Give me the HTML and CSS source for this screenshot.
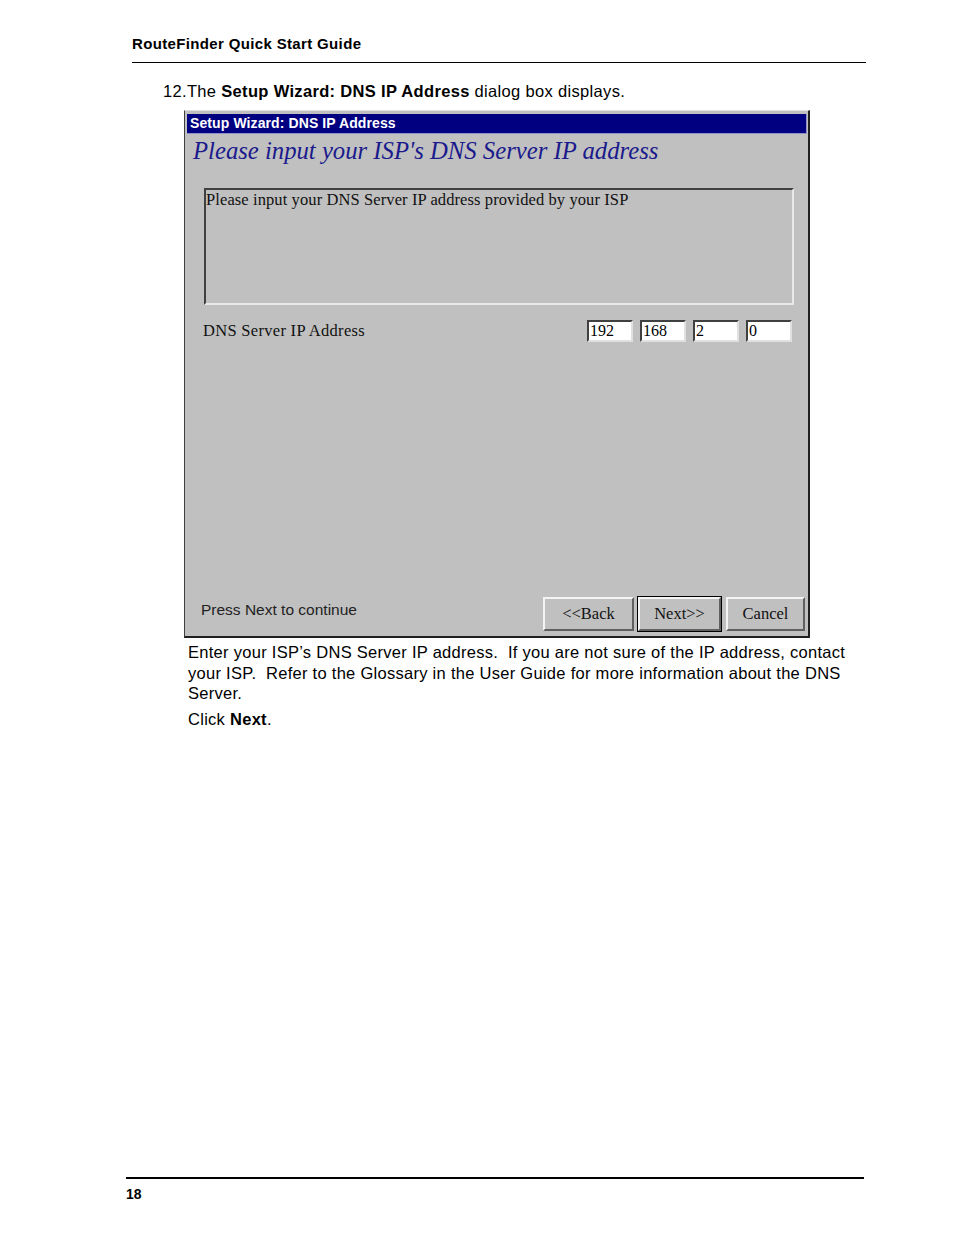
FILE: index.html
```html
<!DOCTYPE html>
<html>
<head>
<meta charset="utf-8">
<link rel="stylesheet" href="styles.css">
</head>
<body>
<div class="page">
  <div class="runhead">RouteFinder Quick Start Guide</div>
  <p class="step">12.The <b>Setup Wizard: DNS IP Address</b> dialog box displays.</p>
  <div class="dialog">
    <div class="titlebar">Setup Wizard: DNS IP Address</div>
    <div class="heading">Please input your ISP's DNS Server IP address</div>
    <div class="group">Please input your DNS Server IP address provided by your ISP</div>
    <div class="iprow">
      <span class="iplabel">DNS Server IP Address</span>
      <div class="ipfields">
        <span class="field">192</span>
        <span class="field">168</span>
        <span class="field">2</span>
        <span class="field">0</span>
      </div>
    </div>
    <div class="spacer"></div>
    <div class="footer">
      <span class="hint">Press Next to continue</span>
      <div class="buttons">
        <span class="btn back">&lt;&lt;Back</span>
        <span class="btn next">Next&gt;&gt;</span>
        <span class="btn cancel">Cancel</span>
      </div>
    </div>
  </div>
  <div class="body">
    <p class="para">Enter your ISP’s DNS Server IP address.&nbsp; If you are not sure of the IP address, contact your ISP.&nbsp; Refer to the Glossary in the User Guide for more information about the DNS Server.</p>
    <p class="para click">Click <b>Next</b>.</p>
  </div>
  <div class="pagefoot">18</div>
</div>
</body>
</html>
```

FILE: styles.css
```css
html, body {
  margin: 0;
  padding: 0;
  background: #ffffff;
}
.page {
  position: relative;
  width: 954px;
  height: 1235px;
  font-family: "Liberation Sans", Arial, sans-serif;
  color: #000;
}
.runhead {
  margin-left: 132px;
  width: 734px;
  padding-top: 35px;
  font-size: 15px;
  letter-spacing: 0.35px;
  line-height: 18px;
  height: 18px;
  padding-bottom: 9px;
  font-weight: bold;
  border-bottom: 1px solid #000;
}
.step {
  margin: 0 0 0 163px;
  padding-top: 18px;
  font-size: 16.5px;
  letter-spacing: 0.33px;
  line-height: 20px;
  height: 20px;
}
.dialog {
  margin: 9px 0 0 184px;
  width: 626px;
  height: 528px;
  box-sizing: border-box;
  background: #c0c0c0;
  border-top: 1px solid #dfdfdf;
  border-left: 1px solid #404040;
  border-right: 2px solid #202020;
  border-bottom: 2px solid #202020;
  display: flex;
  flex-direction: column;
  padding: 3px 1px 0 2px;
}
.titlebar {
  background: #000080;
  color: #fff;
  font-weight: bold;
  font-size: 14px;
  letter-spacing: 0.1px;
  line-height: 19px;
  height: 19px;
  padding-left: 3px;
  border-right: 1px solid #9090c8;
  border-bottom: 1px solid #9090c8;
}
.heading {
  font-family: "Liberation Serif", "Times New Roman", serif;
  font-style: italic;
  color: #1a1a8c;
  font-size: 24.7px;
  line-height: 30px;
  padding: 2px 0 0 6px;
  height: 31px;
}
.group {
  margin: 21px 13px 0 17px;
  height: 117px;
  box-sizing: border-box;
  border-top: 2px solid #404040;
  border-left: 2px solid #404040;
  border-right: 2px solid #e8e8e8;
  border-bottom: 2px solid #e8e8e8;
  font-family: "Liberation Serif", "Times New Roman", serif;
  font-size: 16.5px;
  letter-spacing: 0.1px;
  line-height: 20px;
  padding-left: 0;
  color: #111;
}
.iprow {
  display: flex;
  justify-content: space-between;
  align-items: center;
  margin: 15px 15px 0 16px;
  height: 22px;
}
.iplabel {
  font-family: "Liberation Serif", "Times New Roman", serif;
  font-size: 16.5px;
  letter-spacing: 0.3px;
  color: #111;
  margin-top: -1px;
}
.ipfields {
  display: flex;
  gap: 7px;
}
.field {
  width: 46px;
  height: 22px;
  box-sizing: border-box;
  background: #fff;
  border-top: 2px solid #404040;
  border-left: 2px solid #404040;
  border-right: 2px solid #e0e0e0;
  border-bottom: 2px solid #e0e0e0;
  font-family: "Liberation Serif", "Times New Roman", serif;
  font-size: 16px;
  line-height: 18px;
  padding-left: 1px;
}
.spacer {
  flex: 1;
}
.footer {
  display: flex;
  justify-content: space-between;
  align-items: center;
  padding: 0 2px 5px 14px;
  height: 34px;
}
.hint {
  font-size: 15.5px;
  color: #222;
  margin-top: -9px;
}
.buttons {
  display: flex;
}
.btn {
  display: flex;
  align-items: center;
  justify-content: center;
  height: 34px;
  box-sizing: border-box;
  font-family: "Liberation Serif", "Times New Roman", serif;
  font-size: 16.5px;
  color: #111;
  border-top: 2px solid #f4f4f4;
  border-left: 2px solid #f4f4f4;
  border-right: 2px solid #606060;
  border-bottom: 2px solid #606060;
}
.back { width: 91px; margin-right: 4px; }
.next {
  width: 83px;
  margin-right: 5px;
  outline: 1px solid #000;
  outline-offset: 0;
}
.cancel { width: 79px; }
.body {
  margin-left: 188px;
  width: 666px;
  padding-top: 4px;
}
.para {
  margin: 0;
  font-size: 16.5px;
  letter-spacing: 0.28px;
  line-height: 20.5px;
}
.click {
  margin-top: 5px;
}
.pagefoot {
  position: absolute;
  left: 126px;
  top: 1177px;
  width: 738px;
  border-top: 2px solid #000;
  padding-top: 6px;
  font-size: 14px;
  font-weight: bold;
  line-height: 18px;
}
```
